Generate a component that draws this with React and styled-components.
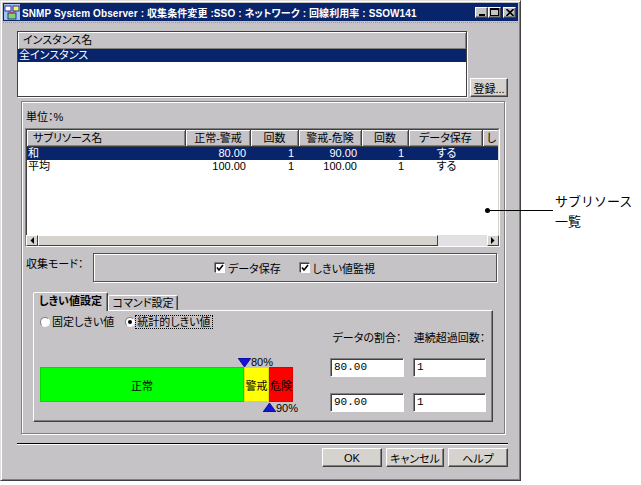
import React from "react"
import styled, { createGlobalStyle } from "styled-components"

const FACE = "#c6c3c6"
const LIGHT = "#d6d3ce"
const NAVY = "#08246b"
const UI_FONT = `"Liberation Sans", "Noto Sans CJK JP", sans-serif`

const GlobalStyle = createGlobalStyle`
  html, body { margin: 0; padding: 0; background: #fff; }
  body {
    font-family: ${UI_FONT};
    font-size: 11px;
    color: #000;
    font-feature-settings: "palt";
  }
  * { box-sizing: border-box; }
`

const Page = styled.div`
  position: relative;
  width: 641px;
  height: 485px;
`

const Window = styled.div`
  width: 521px;
  height: 481px;
  background: ${FACE};
  border: 1px solid;
  border-color: #e0dfe0 #404040 #404040 #e0dfe0;
  box-shadow: inset 1px 1px 0 #fff, inset -1px -1px 0 #808080;
  padding: 2px;
  display: flex;
  flex-direction: column;
`

const TitleBar = styled.div`
  height: 18px;
  background: ${NAVY};
  display: flex;
  align-items: center;
  padding: 0 2px 0 1px;
  gap: 2px;
`

const TitleText = styled.span`
  flex: 1;
  color: #fff;
  font-weight: bold;
  font-size: 10px;
  letter-spacing: 0.1px;
  white-space: nowrap;
  overflow: hidden;
`

const Controls = styled.div`
  display: flex;
  align-items: center;
`

const CtrlButton = styled.div`
  width: 13px;
  height: 11px;
  margin-left: ${p => p.$gap || 0}px;
  background: ${FACE};
  border: 1px solid;
  border-color: #fff #404040 #404040 #fff;
  box-shadow: inset -1px -1px 0 #808080;
  display: flex;
  align-items: center;
  justify-content: center;
`

const DottedRule = styled.div`
  margin-top: 1px;
  height: 1px;
  border-top: 1px dotted #9c9a9c;
`

const Body = styled.div`
  flex: 1;
  display: flex;
  flex-direction: column;
  padding: 8px 10px 0 14px;
`

const TopRow = styled.div`
  display: flex;
  align-items: flex-end;
  gap: 3px;
`

const ListBox = styled.div`
  width: 450px;
  height: 66px;
  background: #fff;
  border: 1px solid #404040;
  box-shadow: 1px 1px 0 #fff;
  display: flex;
  flex-direction: column;
`

const ListHeader = styled.div`
  height: 17px;
  line-height: 17px;
  padding-left: 5px;
  background: ${FACE};
  box-shadow: inset 1px 1px 0 #fff, inset -1px -1px 0 #808080;
`

const ListItem = styled.div`
  height: 13px;
  line-height: 13px;
  padding-left: 1px;
  background: ${p => (p.$selected ? NAVY : "transparent")};
  color: ${p => (p.$selected ? "#fff" : "#000")};
`

const Button = styled.button`
  width: ${p => p.$w}px;
  height: 19px;
  padding: 0;
  background: ${LIGHT};
  border: 1px solid;
  border-color: #fff #404040 #404040 #fff;
  box-shadow: inset -1px -1px 0 #808080;
  font: inherit;
  color: #000;
`

const Group = styled.div`
  margin: 4px 3px 0 4px;
  height: 333px;
  border: 1px solid #808080;
  box-shadow: inset 1px 1px 0 #fff, 1px 1px 0 #fff;
  padding: 8px 4px 0 3px;
  display: flex;
  flex-direction: column;
`

const UnitLabel = styled.div`
  line-height: 14px;
  margin: 0 0 4px 1px;
`

const Table = styled.div`
  height: 119px;
  background: #fff;
  border: 1px solid;
  border-color: #808080 #fff #fff #808080;
  display: flex;
  flex-direction: column;
  overflow: hidden;
`

const TableView = styled.div`
  flex: 1;
  overflow: hidden;
  border-top: 1px solid #404040;
  border-left: 1px solid #404040;
  border-right: 1px solid ${LIGHT};
  display: flex;
  flex-direction: column;
`

const Row = styled.div`
  display: flex;
  height: ${p => (p.$header ? 17 : 13)}px;
  background: ${p => (p.$selected ? NAVY : "transparent")};
  color: ${p => (p.$selected ? "#fff" : "#000")};
`

const HeadCell = styled.div`
  flex: none;
  width: ${p => p.$w}px;
  line-height: 17px;
  text-align: ${p => (p.$align === "left" ? "left" : "center")};
  padding-left: ${p => (p.$align === "left" ? 6 : 0)}px;
  background: ${FACE};
  border-right: 1px solid #404040;
  border-bottom: 1px solid #404040;
  box-shadow: inset 1px 1px 0 #fff, inset -1px -1px 0 #808080;
  white-space: nowrap;
  overflow: hidden;
`

const Cell = styled.div`
  flex: none;
  width: ${p => p.$w}px;
  line-height: 13px;
  text-align: ${p => p.$align};
  padding: 0 ${p => (p.$align === "right" ? 5 : 0)}px 0 1px;
  white-space: nowrap;
`

const Scrollbar = styled.div`
  height: 11px;
  display: flex;
  background: #e2e0e2;
`

const ScrollArrow = styled.div`
  width: 12px;
  height: 11px;
  background: ${LIGHT};
  border: 1px solid;
  border-color: #fff #404040 #404040 #fff;
  display: flex;
  align-items: center;
  justify-content: center;
`

const ScrollThumb = styled.div`
  width: ${p => p.$w}px;
  height: 11px;
  background: ${LIGHT};
  border: 1px solid;
  border-color: #fff #404040 #404040 #fff;
`

const ScrollTrack = styled.div`
  flex: 1;
`

const ModeRow = styled.div`
  margin-top: 6px;
  height: 29px;
  display: flex;
`

const ModeLabel = styled.div`
  width: 68px;
  padding: 5px 0 0 1px;
  line-height: 12px;
`

const ModeBox = styled.div`
  width: 404px;
  height: 29px;
  border: 1px solid #525052;
  box-shadow: inset 1px 1px 0 #fff, 1px 1px 0 #fff;
  display: flex;
  align-items: center;
  justify-content: center;
  gap: 19px;
`

const Check = styled.label`
  display: flex;
  align-items: center;
  gap: 3px;
  padding-top: 1px;
`

const CheckBox = styled.span`
  width: 10px;
  height: 10px;
  background: #fff;
  border: 1px solid;
  border-color: #404040 #fff #fff #404040;
  box-shadow: -1px -1px 0 #808080;
  display: flex;
  align-items: center;
  justify-content: center;
`

const TabArea = styled.div`
  margin: 10px 0 0 8px;
  width: 460px;
`

const TabStrip = styled.div`
  display: flex;
  align-items: flex-end;
  height: 18px;
`

const Tab = styled.div`
  width: ${p => p.$w}px;
  height: ${p => (p.$active ? 19 : 15)}px;
  margin-bottom: ${p => (p.$active ? -1 : 0)}px;
  position: relative;
  z-index: ${p => (p.$active ? 1 : 0)};
  background: ${FACE};
  border: 1px solid;
  border-bottom: none;
  border-color: #fff #404040 transparent #fff;
  box-shadow: inset -1px 0 0 #808080;
  font-weight: ${p => (p.$active ? "bold" : "normal")};
  text-align: center;
  line-height: ${p => (p.$active ? 16 : 14)}px;
  border-radius: 2px 2px 0 0;
`

const TabPanel = styled.div`
  height: 112px;
  border: 1px solid;
  border-color: #fff #404040 #404040 #fff;
  box-shadow: inset -1px -1px 0 #808080;
  display: flex;
  flex-direction: column;
`

const RadioRow = styled.div`
  display: flex;
  align-items: center;
  gap: 10px;
  padding: 5px 0 0 6px;
  height: 17px;
`

const Radio = styled.label`
  display: flex;
  align-items: center;
  gap: 1px;
`

const RadioDot = styled.span`
  width: 10px;
  height: 10px;
  border-radius: 50%;
  background: #fff;
  border: 1px solid;
  border-color: #808080 #fff #fff #808080;
  box-shadow: 0 0 0 0.5px #c0c0c0;
  display: flex;
  align-items: center;
  justify-content: center;
  &::after {
    content: "";
    width: 4px;
    height: 4px;
    border-radius: 50%;
    background: ${p => (p.$on ? "#000" : "transparent")};
  }
`

const RadioText = styled.span`
  padding: 0 1px;
  line-height: 12px;
  outline: ${p => (p.$focus ? "1px dotted #000" : "none")};
`

const PanelBody = styled.div`
  display: flex;
`

const Chart = styled.div`
  width: 290px;
  margin: 29px 0 0 6px;
  display: flex;
  flex-direction: column;
`

const MarkerRow = styled.div`
  height: 10px;
  display: flex;
  align-items: flex-end;
  padding-left: ${p => p.$at - 6}px;
`

const MarkerText = styled.span`
  line-height: 9px;
  font-size: 11px;
  margin-bottom: ${p => (p.$below ? -1 : 0)}px;
`

const Bar = styled.div`
  display: flex;
  height: 35px;
`

const Segment = styled.div`
  width: ${p => p.$w}px;
  background: ${p => p.$color};
  box-shadow: inset 0 0 0 1px rgba(0, 0, 0, 0.12);
  display: flex;
  align-items: center;
  justify-content: center;
  white-space: nowrap;
`

const Form = styled.div`
  display: grid;
  grid-template-columns: 74px 73px;
  column-gap: 9px;
  margin-top: 3px;
  align-content: start;
`

const FormLabel = styled.div`
  line-height: 14px;
  text-align: center;
  margin-bottom: 13px;
`

const Input = styled.div`
  height: 19px;
  margin-bottom: 16px;
  background: #fff;
  border: 1px solid;
  border-color: #808080 #fff #fff #808080;
  box-shadow: inset 1px 1px 0 #404040;
  padding: 1px 0 0 3px;
  font-family: "Liberation Mono", "Noto Sans CJK JP", monospace;
  font-size: 11px;
  line-height: 15px;
`

const Separator = styled.div`
  margin-top: 9px;
  height: 2px;
  border-top: 1px solid #000;
  border-bottom: 1px solid #fff;
`

const ButtonRow = styled.div`
  margin-top: 3px;
  display: flex;
  justify-content: flex-end;
  gap: 4px;
`

const Callout = styled.div`
  position: absolute;
  left: 485px;
  top: 191px;
  display: flex;
  align-items: flex-start;
`

const Leader = styled.div`
  margin-top: 17px;
  width: 68px;
  height: 5px;
  display: flex;
  align-items: center;
  &::before {
    content: "";
    width: 5px;
    height: 5px;
    border-radius: 50%;
    background: #000;
  }
  &::after {
    content: "";
    flex: 1;
    height: 1px;
    background: #000;
  }
`

const CalloutText = styled.div`
  margin-left: 2px;
  font-family: "Noto Sans CJK JP", sans-serif;
  font-feature-settings: normal;
  font-size: 13px;
  line-height: 20px;
`

const AppIcon = () => (
  <svg width="16" height="16" viewBox="0 0 16 16">
    <rect x="0" y="0" width="16" height="16" fill="#9cc6ef" />
    <rect x="1" y="2" width="6" height="5" fill="#fff" stroke="#31309c" strokeWidth="1" />
    <rect x="9" y="2" width="6" height="5" fill="#ffef63" stroke="#31309c" strokeWidth="1" />
    <rect x="4" y="9" width="8" height="6" fill="#7bd66b" stroke="#31309c" strokeWidth="1" />
    <path d="M4 7 L8 9 M12 7 L8 9" stroke="#ce3131" strokeWidth="1" />
  </svg>
)

const MinGlyph = () => (
  <svg width="8" height="7" viewBox="0 0 8 7">
    <rect x="1" y="5" width="6" height="2" fill="#000" />
  </svg>
)

const MaxGlyph = () => (
  <svg width="9" height="8" viewBox="0 0 9 8">
    <rect x="0.5" y="0.5" width="8" height="7" fill="none" stroke="#000" />
    <rect x="0" y="0" width="9" height="2" fill="#000" />
  </svg>
)

const CloseGlyph = () => (
  <svg width="8" height="7" viewBox="0 0 8 7">
    <path d="M0.5 0 L7.5 7 M7.5 0 L0.5 7" stroke="#000" strokeWidth="1.6" />
  </svg>
)

const Arrow = ({ dir }) => (
  <svg width="4" height="7" viewBox="0 0 4 7">
    <polygon points={dir === "left" ? "4,0 4,7 0.5,3.5" : "0,0 0,7 3.5,3.5"} fill="#000" />
  </svg>
)

const Tick = () => (
  <svg width="8" height="8" viewBox="0 0 8 8">
    <path d="M1 3.5 L3 6 L7 1" fill="none" stroke="#000" strokeWidth="1.6" />
  </svg>
)

const Triangle = ({ up }) => (
  <svg width="13" height="9" viewBox="0 0 13 9">
    <polygon points={up ? "6.5,0 13,9 0,9" : "0,0 13,0 6.5,9"} fill="#1414d6" stroke="#000084" strokeWidth="0.8" />
  </svg>
)

// the last column is scrolled mostly out of view, as in the screenshot
const columns = [
  { title: "サブリソース名", width: 159, align: "left" },
  { title: "正常-警戒", width: 65, align: "right" },
  { title: "回数", width: 48, align: "right" },
  { title: "警戒-危険", width: 63, align: "right" },
  { title: "回数", width: 47, align: "right" },
  { title: "データ保存", width: 74, align: "center" },
  { title: "し", width: 18, align: "center" },
]

const rows = [
  ["和", "80.00", "1", "90.00", "1", "する"],
  ["平均", "100.00", "1", "100.00", "1", "する"],
]

const segments = [
  { label: "正常", width: 204, color: "#00ff00" },
  { label: "警戒", width: 25, color: "#ffff00" },
  { label: "危険", width: 24, color: "#ff0000" },
]

const App = () => {
  const warnAt = segments[0].width
  const dangerAt = segments[0].width + segments[1].width

  return (
    <Page>
      <GlobalStyle />
      <Window>
        <TitleBar>
          <AppIcon />
          <TitleText>
            SNMP System Observer : 収集条件変更 :SSO : ネットワーク : 回線利用率 : SSOW141
          </TitleText>
          <Controls>
            <CtrlButton><MinGlyph /></CtrlButton>
            <CtrlButton><MaxGlyph /></CtrlButton>
            <CtrlButton $gap={2}><CloseGlyph /></CtrlButton>
          </Controls>
        </TitleBar>
        <DottedRule />
        <Body>
          <TopRow>
            <ListBox>
              <ListHeader>インスタンス名</ListHeader>
              <ListItem $selected>全インスタンス</ListItem>
            </ListBox>
            <Button $w={38}>登録...</Button>
          </TopRow>

          <Group>
            <UnitLabel>単位：%</UnitLabel>
            <Table>
              <TableView>
                <Row $header>
                  {columns.map((c, i) => (
                    <HeadCell key={i} $w={c.width} $align={c.align}>
                      {c.title}
                    </HeadCell>
                  ))}
                </Row>
                {rows.map((r, ri) => (
                  <Row key={ri} $selected={ri === 0}>
                    {r.map((v, ci) => (
                      <Cell key={ci} $w={columns[ci].width} $align={columns[ci].align}>
                        {v}
                      </Cell>
                    ))}
                  </Row>
                ))}
              </TableView>
              <Scrollbar>
                <ScrollArrow><Arrow dir="left" /></ScrollArrow>
                <ScrollThumb $w={400} />
                <ScrollTrack />
                <ScrollArrow><Arrow dir="right" /></ScrollArrow>
              </Scrollbar>
            </Table>

            <ModeRow>
              <ModeLabel>収集モード：</ModeLabel>
              <ModeBox>
                <Check>
                  <CheckBox><Tick /></CheckBox>
                  データ保存
                </Check>
                <Check>
                  <CheckBox><Tick /></CheckBox>
                  しきい値監視
                </Check>
              </ModeBox>
            </ModeRow>

            <TabArea>
              <TabStrip>
                <Tab $w={75} $active>しきい値設定</Tab>
                <Tab $w={70}>コマンド設定</Tab>
              </TabStrip>
              <TabPanel>
                <RadioRow>
                  <Radio>
                    <RadioDot />
                    <RadioText>固定しきい値</RadioText>
                  </Radio>
                  <Radio>
                    <RadioDot $on />
                    <RadioText $focus>統計的しきい値</RadioText>
                  </Radio>
                </RadioRow>
                <PanelBody>
                  <Chart>
                    <MarkerRow $at={warnAt}>
                      <Triangle />
                      <MarkerText>80%</MarkerText>
                    </MarkerRow>
                    <Bar>
                      {segments.map(s => (
                        <Segment key={s.label} $w={s.width} $color={s.color}>
                          {s.label}
                        </Segment>
                      ))}
                    </Bar>
                    <MarkerRow $at={dangerAt}>
                      <Triangle up />
                      <MarkerText $below>90%</MarkerText>
                    </MarkerRow>
                  </Chart>
                  <Form>
                    <FormLabel>データの割合：</FormLabel>
                    <FormLabel>連続超過回数：</FormLabel>
                    <Input>80.00</Input>
                    <Input>1</Input>
                    <Input>90.00</Input>
                    <Input>1</Input>
                  </Form>
                </PanelBody>
              </TabPanel>
            </TabArea>
          </Group>

          <Separator />
          <ButtonRow>
            <Button $w={60}>OK</Button>
            <Button $w={58}>キャンセル</Button>
            <Button $w={60}>ヘルプ</Button>
          </ButtonRow>
        </Body>
      </Window>

      <Callout>
        <Leader />
        <CalloutText>
          サブリソース
          <br />
          一覧
        </CalloutText>
      </Callout>
    </Page>
  )
}

export default App
